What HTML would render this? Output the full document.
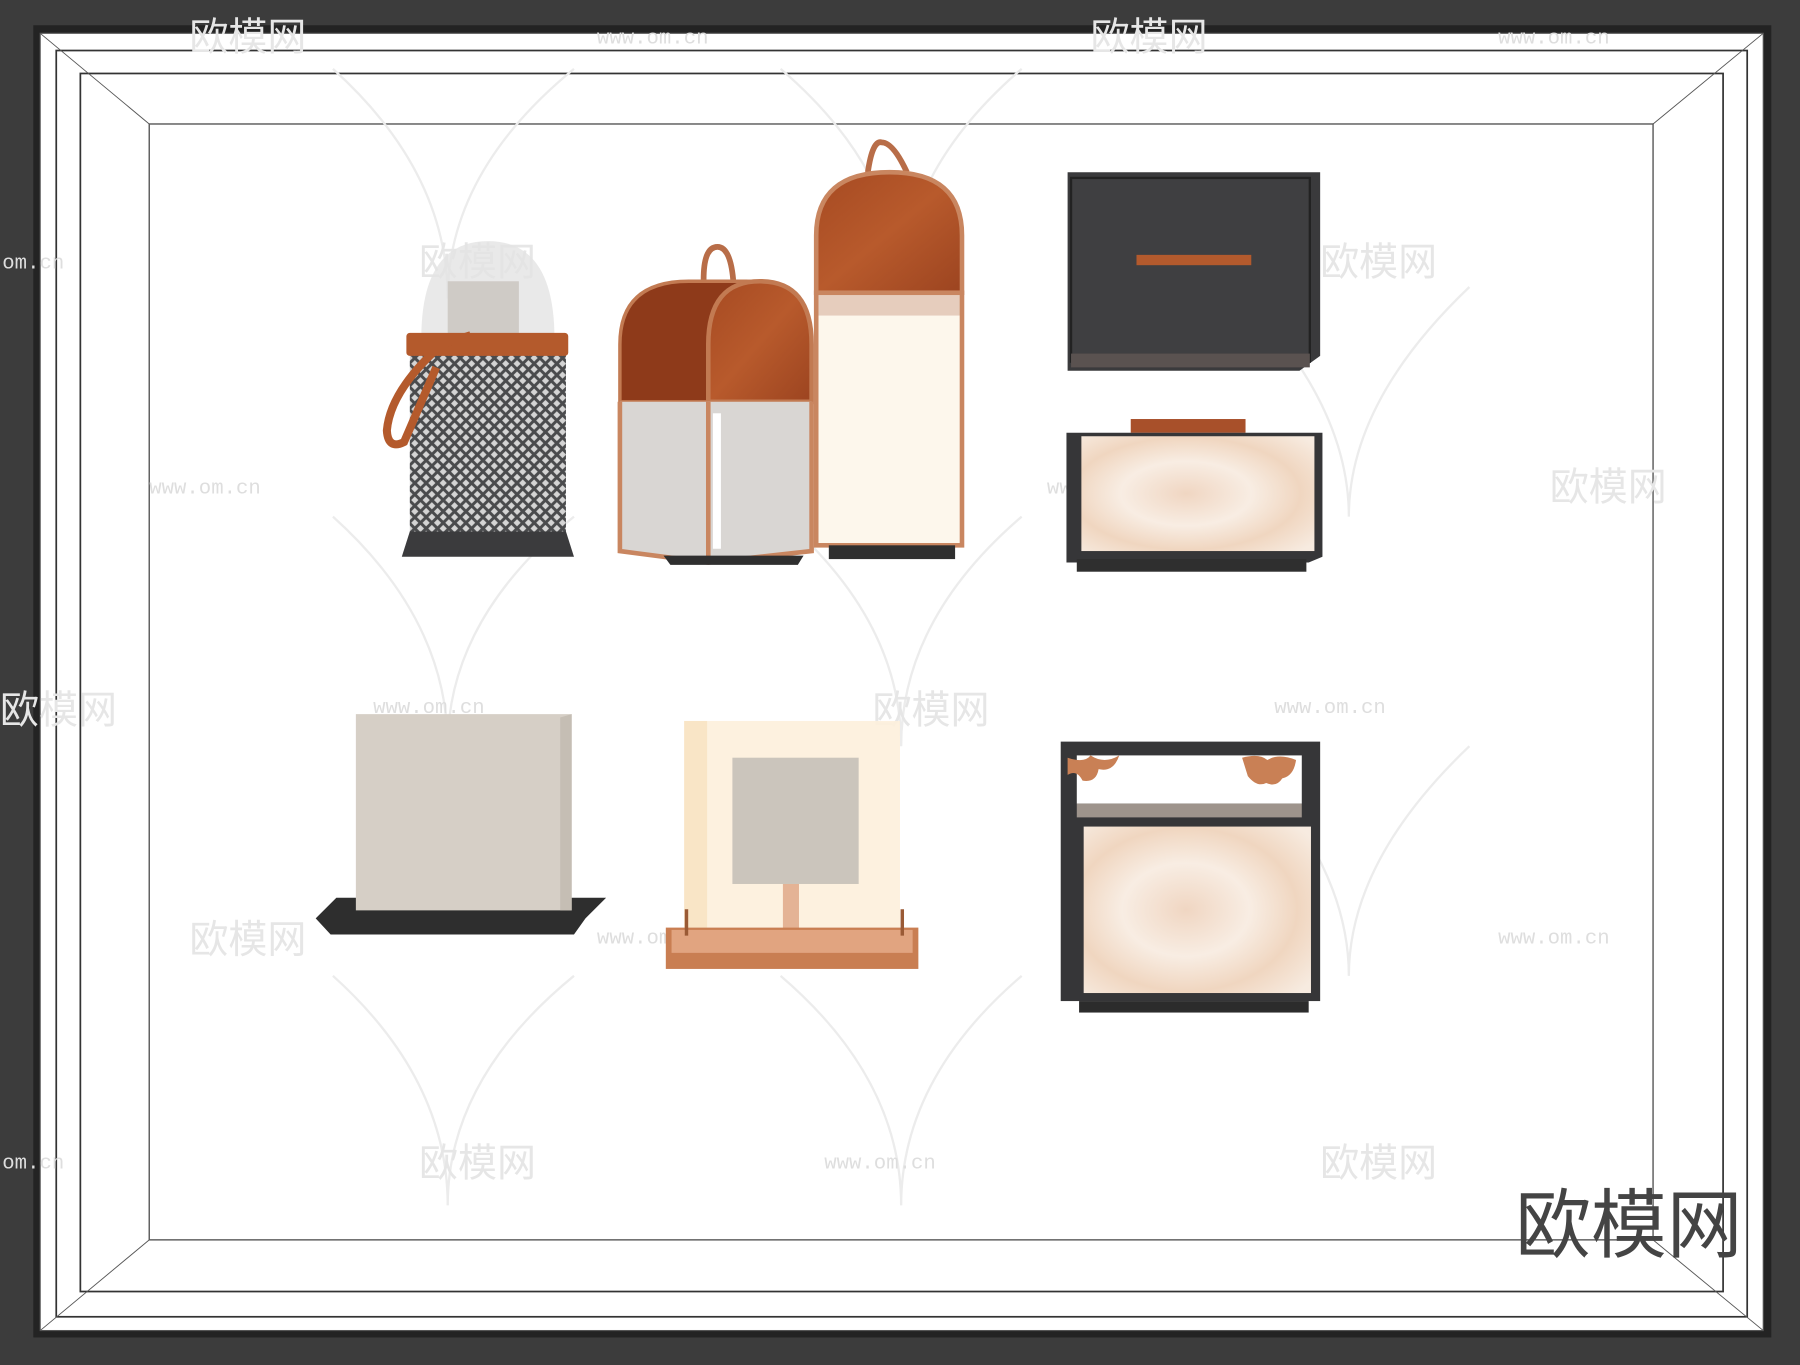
<!DOCTYPE html>
<html><head><meta charset="utf-8"><style>
html,body{margin:0;padding:0;background:#3c3c3c;}
svg{display:block}
</style></head><body>
<svg width="1800" height="1365" viewBox="0 0 1568 1189" preserveAspectRatio="none" xmlns="http://www.w3.org/2000/svg">
<defs>
<pattern id="mesh" width="7" height="7" patternUnits="userSpaceOnUse" patternTransform="rotate(45)">
<rect width="7" height="7" fill="#4a4b4d"/><rect x="1.3" y="1.3" width="4.4" height="4.4" fill="#d4d4d4"/>
</pattern>
<linearGradient id="rust" x1="0" y1="0" x2="1" y2="1"><stop offset="0" stop-color="#a64a22"/><stop offset="0.5" stop-color="#b85a2c"/><stop offset="1" stop-color="#9c4420"/></linearGradient>
<radialGradient id="marble" cx="0.45" cy="0.5" r="0.7"><stop offset="0" stop-color="#f0d6c2"/><stop offset="0.4" stop-color="#f8ede3"/><stop offset="0.7" stop-color="#f0d6c0"/><stop offset="1" stop-color="#f7ebe0"/></radialGradient>
</defs>
<rect width="1568" height="1189" fill="#3c3c3c"/>
<rect x="29" y="22" width="1514" height="1143" fill="#232323"/>
<rect x="35" y="29" width="1501" height="1130" fill="#fff" stroke="#555" stroke-width="1"/>
<rect x="49" y="44" width="1473" height="1103" fill="none" stroke="#333" stroke-width="1.5"/>
<rect x="70" y="64" width="1431" height="1061" fill="none" stroke="#333" stroke-width="1.5"/>
<rect x="130" y="108" width="1310" height="972" fill="none" stroke="#555" stroke-width="1.2"/>
<g stroke="#555" stroke-width="0.8">
<line x1="35" y1="29" x2="130" y2="108"/><line x1="1536" y1="29" x2="1440" y2="108"/>
<line x1="35" y1="1159" x2="130" y2="1080"/><line x1="1536" y1="1159" x2="1440" y2="1080"/>
</g>
<g fill="none" stroke="#ececec" stroke-width="2">
<path d="M290 60 Q390 150 390 260 Q390 150 500 60"/>
<path d="M290 450 Q390 540 390 650 Q390 540 500 450"/>
<path d="M680 60 Q785 150 785 260 Q785 150 890 60"/>
<path d="M680 450 Q785 540 785 650 Q785 540 890 450"/>
<path d="M680 850 Q785 940 785 1050 Q785 940 890 850"/>
<path d="M1075 250 Q1175 350 1175 450 Q1175 350 1280 250"/>
<path d="M1075 650 Q1175 750 1175 850 Q1175 750 1280 650"/>
<path d="M290 850 Q390 940 390 1050 Q390 940 500 850"/>
</g>
<g font-family="Liberation Sans, 'Noto Sans CJK SC', sans-serif" fill="#e6e6e6" font-size="34">
<text x="165" y="44">欧模网</text><text x="950" y="44">欧模网</text>
<text x="365" y="240">欧模网</text><text x="1150" y="240">欧模网</text>
<text x="565" y="436">欧模网</text><text x="1350" y="436">欧模网</text>
<text x="760" y="630">欧模网</text><text x="0" y="630">欧模网</text>
<text x="165" y="830">欧模网</text><text x="950" y="830">欧模网</text>
<text x="365" y="1025">欧模网</text><text x="1150" y="1025">欧模网</text>
</g>
<g font-family="Liberation Mono, monospace" fill="#dedede" font-size="18">
<text x="520" y="38">www.om.cn</text><text x="1305" y="38">www.om.cn</text>
<text x="718" y="234">www.om.cn</text><text x="130" y="430">www.om.cn</text>
<text x="912" y="430">www.om.cn</text><text x="325" y="621">www.om.cn</text>
<text x="1110" y="621">www.om.cn</text><text x="520" y="822">www.om.cn</text>
<text x="1305" y="822">www.om.cn</text><text x="718" y="1018">www.om.cn</text>
<text x="2" y="234">om.cn</text><text x="2" y="1018">om.cn</text>
</g>

<path d="M367 295 Q367 210 425 210 Q483 210 483 295 Z" fill="#e4e4e4" opacity="0.8"/>
<rect x="390" y="245" width="62" height="50" fill="#cfcbc6"/>
<path d="M357 307 L493 307 L493 465 L357 465 Z" fill="url(#mesh)"/>
<path d="M357 463 L493 463 L500 485 L350 485 Z" fill="#3b3b3d"/>
<rect x="354" y="290" width="141" height="20" rx="3" fill="#b45a2c"/>
<path d="M410 292 L385 300 Q340 340 337 375 Q338 392 352 385 L380 320" fill="none" stroke="#b45a2c" stroke-width="7"/>
<path d="M613 248 Q612 215 625 215 Q637 215 639 248" fill="none" stroke="#b86d48" stroke-width="5"/>
<path d="M540 350 L540 300 Q540 245 600 245 L650 245 Q707 245 707 300 L707 350 Z" fill="#8e3a1a" stroke="#c27a52" stroke-width="3"/>
<path d="M617 350 L617 300 Q617 245 662 245 Q707 245 707 300 L707 350 Z" fill="url(#rust)" stroke="#c27a52" stroke-width="4"/>
<path d="M540 350 L707 350 L707 480 L617 490 L540 480 Z" fill="#d9d6d3"/>
<rect x="621" y="360" width="7" height="118" fill="#fff"/>
<path d="M540 350 L540 480 L617 490 L707 480 L707 350 M617 350 L617 490" fill="none" stroke="#c98660" stroke-width="4"/>
<path d="M578 484 L700 484 L695 492 L584 492 Z" fill="#2f2f2f"/>
<path d="M756 150 Q760 122 768 124 Q778 124 790 150" fill="none" stroke="#b86d48" stroke-width="5"/>
<path d="M711 255 L711 205 Q711 150 775 150 Q838 150 838 205 L838 255 Z" fill="url(#rust)" stroke="#c98660" stroke-width="4"/>
<rect x="711" y="255" width="127" height="20" fill="#e6cdbd"/>
<rect x="711" y="275" width="127" height="200" fill="#fdf7ec"/>
<rect x="711" y="255" width="127" height="220" fill="none" stroke="#c98660" stroke-width="4"/>
<rect x="722" y="475" width="110" height="12" fill="#2f2f2f"/>

<path d="M930 150 L1150 150 L1150 310 L1132 323 L930 323 Z" fill="#3a3a3c"/>
<rect x="933" y="155" width="208" height="160" fill="#3f3f41" stroke="#222" stroke-width="2"/>
<rect x="933" y="308" width="208" height="12" fill="#5a5250"/>
<rect x="990" y="222" width="100" height="9" fill="#b35a2d"/>
<rect x="985" y="365" width="100" height="12" fill="#a8502a"/>
<path d="M929 377 L1152 377 L1152 485 L1140 490 L929 490 Z" fill="#363638"/>
<rect x="942" y="380" width="203" height="100" fill="url(#marble)"/>
<rect x="938" y="487" width="200" height="11" fill="#2f2f2f"/>

<path d="M275 800 L293 782 L528 782 L510 800 L500 814 L288 814 Z" fill="#2e2e2e"/>
<path d="M310 622 L498 622 L498 793 L310 793 Z" fill="#d6cfc6"/>
<path d="M488 625 L498 622 L498 793 L488 793 Z" fill="#c5beb4"/>
<rect x="596" y="628" width="188" height="180" fill="#fdf0dc" opacity="0.9"/>
<rect x="596" y="628" width="20" height="180" fill="#f9e5c6"/>
<rect x="638" y="660" width="110" height="110" fill="#cbc5bc"/>
<rect x="682" y="770" width="14" height="40" fill="#e4b395"/>
<rect x="580" y="808" width="220" height="36" fill="#c97e52"/>
<rect x="585" y="810" width="210" height="20" fill="#e1a480"/>
<line x1="598" y1="792" x2="598" y2="815" stroke="#9a5a35" stroke-width="3"/>
<line x1="786" y1="792" x2="786" y2="815" stroke="#9a5a35" stroke-width="3"/>
<rect x="924" y="646" width="226" height="226" fill="#363638"/>
<rect x="938" y="658" width="196" height="42" fill="#fff"/>
<rect x="938" y="700" width="196" height="12" fill="#9e948c"/>
<rect x="944" y="720" width="198" height="145" fill="url(#marble)"/>
<rect x="940" y="872" width="200" height="10" fill="#2c2c2c"/>
<g fill="#c98055">
<path d="M930 660 q15 5 20 -2 q12 8 25 0 q-5 15 -18 12 q-2 12 -14 10 q-5 -10 -13 -5 z"/>
<path d="M1082 660 q15 -4 22 2 q10 -6 25 0 q-2 14 -12 16 q-5 8 -14 4 q-8 4 -16 -6 z"/>
</g>

<text x="1320" y="1090" font-family="Liberation Sans, 'Noto Sans CJK SC', sans-serif" font-size="66" fill="#444">欧模网</text>
</svg>
</body></html>
